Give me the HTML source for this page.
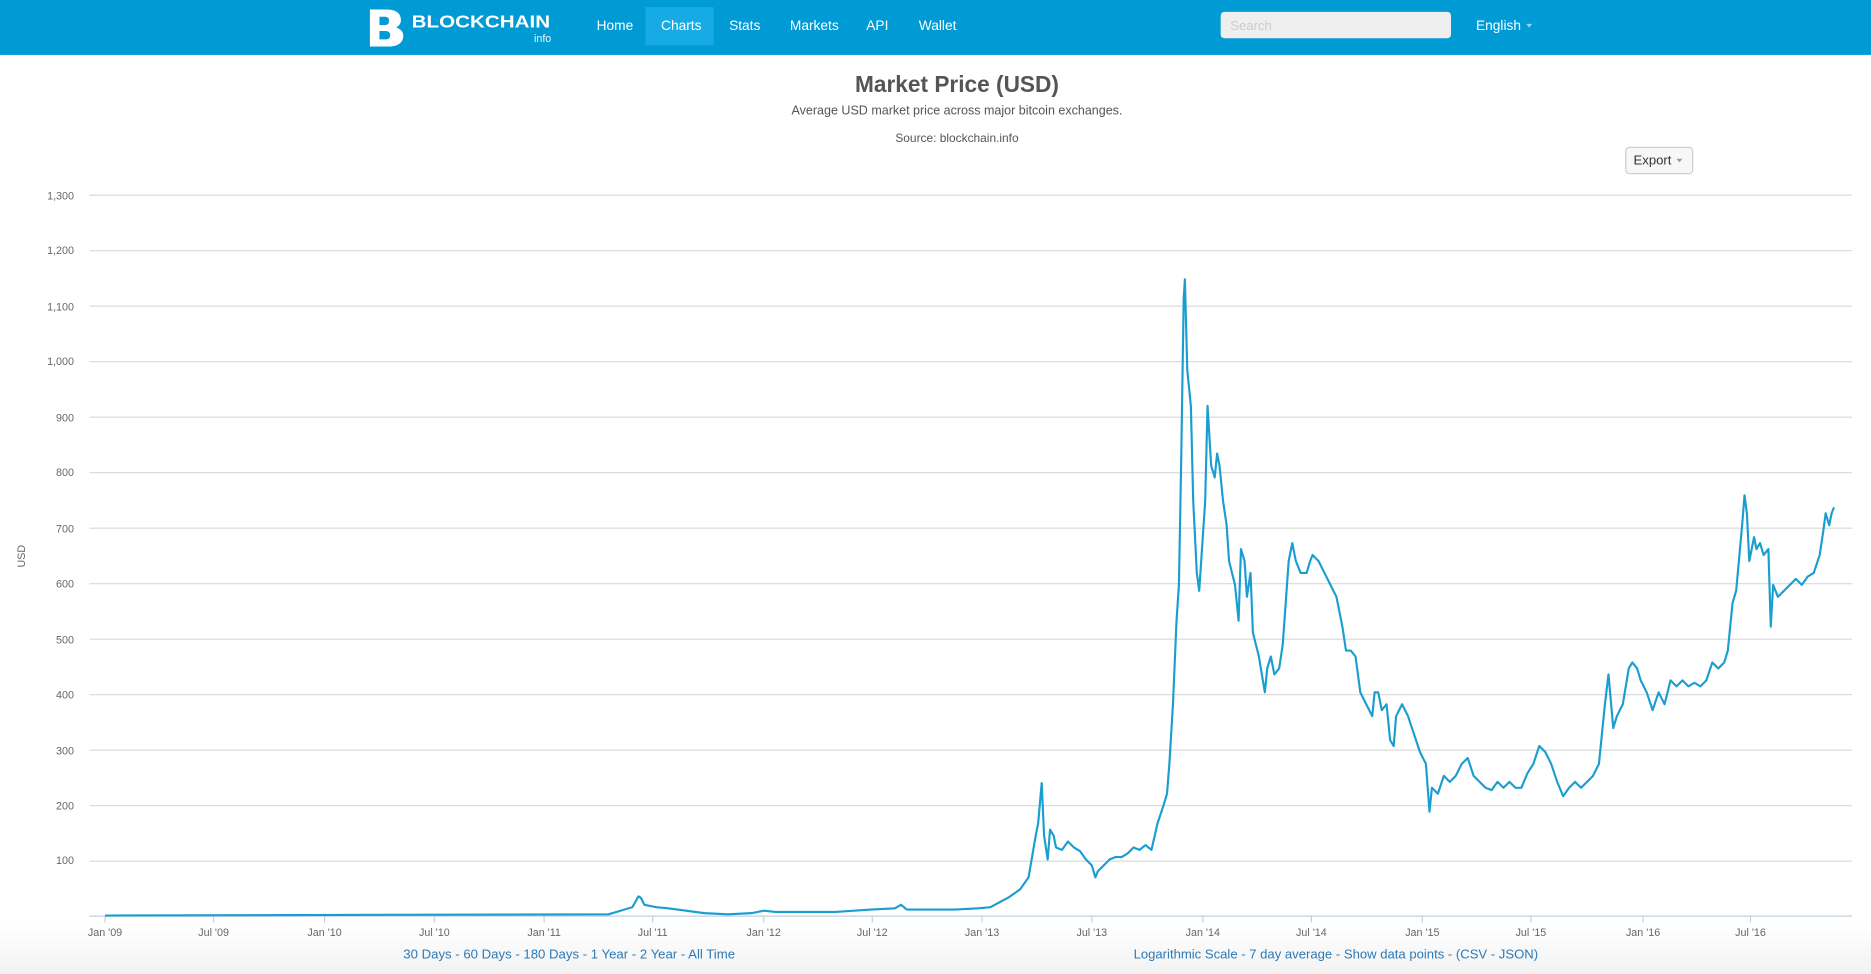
<!DOCTYPE html>
<html><head><meta charset="utf-8"><style>
html,body{margin:0;padding:0;width:1871px;height:974px;overflow:hidden;background:#fff}
svg{display:block}
text{font-family:"Liberation Sans",Arial,sans-serif}
</style></head><body>
<svg width="1871" height="974" viewBox="0 0 1568 816" preserveAspectRatio="none">
<defs><linearGradient id="bg" x1="0" y1="0" x2="0" y2="1"><stop offset="0" stop-color="#fff"/><stop offset="1" stop-color="#f2f2f2"/></linearGradient></defs>
<rect x="0" y="775" width="1568" height="41" fill="url(#bg)"/>
<rect x="0" y="0" width="1568" height="46" fill="#009bd5"/>
<g fill="#fff">
<path d="M310 8h14c9 0 12 4 12 9 0 3-2 5-4 6 3 1 6 3 6 7 0 6-5 9-12 9h-16z M318 14v7h4c3 0 4-1 4-3.5s-1-3.5-4-3.5z M318 26v7h5c3 0 4-1.5 4-3.5s-1-3.5-4-3.5z" fill-rule="evenodd"/>
<text x="345" y="23" font-size="14.5" font-weight="bold" textLength="116" lengthAdjust="spacingAndGlyphs">BLOCKCHAIN</text>
<text x="462" y="35" font-size="9" text-anchor="end" fill="#e6f4fb">info</text>
</g>
<rect x="541" y="6" width="57" height="32" fill="#17abe6"/>
<g fill="#fff" font-size="11.5">
<text x="500" y="25">Home</text><text x="554" y="25">Charts</text><text x="611" y="25">Stats</text>
<text x="662" y="25">Markets</text><text x="726" y="25">API</text><text x="770" y="25">Wallet</text>
<text x="1237" y="25">English</text>
</g>
<path d="M1279 20h5l-2.5 3z" fill="#9fd6ee"/>
<rect x="1023" y="10" width="193" height="22" rx="3" fill="#efefef"/>
<text x="1031" y="25" font-size="11" fill="#ccc">Search</text>
<text x="802" y="77" font-size="19" font-weight="bold" fill="#555" text-anchor="middle">Market Price (USD)</text>
<text x="802" y="96" font-size="10.5" fill="#555" text-anchor="middle">Average USD market price across major bitcoin exchanges.</text>
<text x="802" y="119" font-size="10" fill="#555" text-anchor="middle">Source: blockchain.info</text>
<rect x="1362.5" y="123.5" width="56" height="22" rx="3" fill="#f7f7f7" stroke="#ccc"/>
<text x="1369" y="138" font-size="11" fill="#333">Export</text>
<path d="M1405 133h5l-2.5 3z" fill="#999"/>
<g stroke="#d8d8d8" stroke-width="1">
<line x1="75" x2="1552" y1="163.5" y2="163.5"/><line x1="75" x2="1552" y1="210" y2="210"/><line x1="75" x2="1552" y1="256.5" y2="256.5"/><line x1="75" x2="1552" y1="303" y2="303"/><line x1="75" x2="1552" y1="349.5" y2="349.5"/><line x1="75" x2="1552" y1="396" y2="396"/><line x1="75" x2="1552" y1="442.5" y2="442.5"/><line x1="75" x2="1552" y1="489" y2="489"/><line x1="75" x2="1552" y1="535.5" y2="535.5"/><line x1="75" x2="1552" y1="582" y2="582"/><line x1="75" x2="1552" y1="628.5" y2="628.5"/><line x1="75" x2="1552" y1="675" y2="675"/><line x1="75" x2="1552" y1="721.5" y2="721.5"/>
</g>
<line x1="75" x2="1552" y1="767.5" y2="767.5" stroke="#c0d0e0"/>
<g font-size="9" fill="#666" text-anchor="end">
<text x="62" y="167">1,300</text><text x="62" y="213">1,200</text><text x="62" y="260">1,100</text><text x="62" y="306">1,000</text><text x="62" y="353">900</text><text x="62" y="399">800</text><text x="62" y="446">700</text><text x="62" y="492">600</text><text x="62" y="539">500</text><text x="62" y="585">400</text><text x="62" y="632">300</text><text x="62" y="678">200</text><text x="62" y="724">100</text>
</g>
<text transform="translate(21,466) rotate(-90)" font-size="9" fill="#666" text-anchor="middle">USD</text>
<g stroke="#c0d0e0"><path d="M88 767v6M179 767v6M272 767v6M364 767v6M456 767v6M547 767v6M640 767v6M731 767v6M823 767v6M915 767v6M1008 767v6M1099 767v6M1192 767v6M1283 767v6M1377 767v6M1467 767v6"/></g>
<g font-size="9" fill="#666" text-anchor="middle">
<text x="88" y="784">Jan '09</text><text x="179" y="784">Jul '09</text><text x="272" y="784">Jan '10</text><text x="364" y="784">Jul '10</text><text x="456" y="784">Jan '11</text><text x="547" y="784">Jul '11</text><text x="640" y="784">Jan '12</text><text x="731" y="784">Jul '12</text><text x="823" y="784">Jan '13</text><text x="915" y="784">Jul '13</text><text x="1008" y="784">Jan '14</text><text x="1099" y="784">Jul '14</text><text x="1192" y="784">Jan '15</text><text x="1283" y="784">Jul '15</text><text x="1377" y="784">Jan '16</text><text x="1467" y="784">Jul '16</text>
</g>
<polyline fill="none" stroke="#1a9ed0" stroke-width="1.8" stroke-linejoin="round" points="88,767 510,766 520,763 530,760 535,751 537,752 540,758 550,760 560,761 575,763 590,765 610,766 630,765 640,763 650,764 700,764 730,762 750,761 755,758 760,762 780,762 800,762 820,761 830,760 845,752 855,745 862,735 868,700 870,690 873,656 875,700 878,720 880,695 883,700 885,710 890,712 895,705 900,710 905,713 910,720 915,725 918,735 920,730 925,725 930,720 935,718 940,718 945,715 950,710 955,712 960,708 965,712 970,690 975,675 978,665 980,640 983,590 986,520 988,490 990,380 992,250 993,234 995,310 998,340 1000,420 1003,480 1005,495 1008,450 1010,420 1012,340 1015,390 1018,400 1020,380 1022,390 1025,420 1028,440 1030,470 1035,490 1038,520 1040,460 1043,470 1045,500 1048,480 1050,530 1055,550 1060,580 1062,560 1065,550 1068,565 1072,560 1075,540 1080,470 1083,455 1086,470 1090,480 1095,480 1098,470 1100,465 1105,470 1110,480 1115,490 1120,500 1125,525 1128,545 1132,545 1136,550 1140,580 1145,590 1150,600 1152,580 1155,580 1158,595 1162,590 1165,620 1168,625 1170,600 1175,590 1180,600 1185,615 1190,630 1195,640 1198,680 1200,660 1205,665 1210,650 1215,655 1220,650 1225,640 1230,635 1235,650 1240,655 1245,660 1250,662 1255,655 1260,660 1265,655 1270,660 1275,660 1280,648 1285,640 1290,625 1295,630 1300,640 1305,655 1310,667 1315,660 1320,655 1325,660 1330,655 1335,650 1340,640 1345,590 1348,565 1352,610 1355,600 1360,590 1365,560 1368,555 1372,560 1375,570 1380,580 1385,595 1390,580 1395,590 1400,570 1405,575 1410,570 1415,575 1420,572 1425,575 1430,570 1435,555 1440,560 1445,555 1448,545 1452,505 1455,495 1460,440 1462,415 1464,430 1466,470 1468,460 1470,450 1472,460 1475,455 1478,465 1482,460 1484,525 1486,490 1490,500 1495,495 1500,490 1505,485 1510,490 1515,483 1520,480 1525,465 1528,445 1530,430 1533,440 1535,430 1537,425"/>
<g font-size="10.5" fill="#2a7ab8">
<text x="338" y="803" textLength="278" lengthAdjust="spacingAndGlyphs">30 Days - 60 Days - 180 Days - 1 Year - 2 Year - All Time</text>
<text x="950" y="803" textLength="339" lengthAdjust="spacingAndGlyphs">Logarithmic Scale - 7 day average - Show data points - (CSV - JSON)</text>
</g>
</svg>
</body></html>
